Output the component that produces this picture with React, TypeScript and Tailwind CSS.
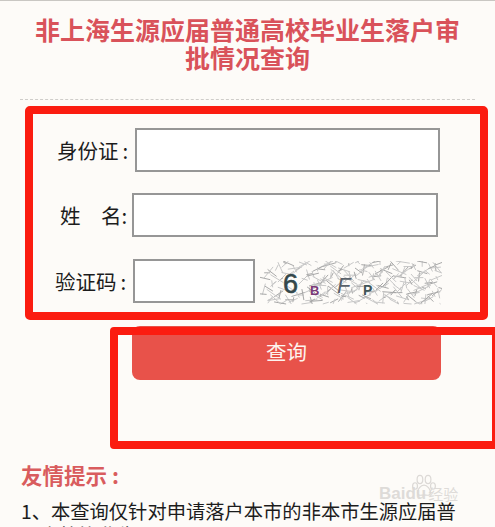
import React from 'react';

const cjk = 'font-["Noto_Sans_CJK_SC",sans-serif]';

// noise scratches behind the captcha letters
const scratches = Array.from({ length: 300 }, (_, i) => {
  const x = (i * 47.3) % 178;
  const y = (i * 29.7) % 42;
  const dx = ((i * 13) % 29) - 14;
  const dy = ((i * 7) % 23) - 11;
  return { x, y, dx, dy };
}).filter((s) => !(s.x > 20 && s.x < 40 && s.y > 10 && s.y < 30) && !(s.x < 18 && s.y < 8));

const Captcha: React.FC = () => (
  <svg width="182" height="44" viewBox="0 0 182 44" className="ml-[5px] mt-[2px] shrink-0">
    {scratches.map((s, i) => (
      <line
        key={i}
        x1={s.x + 3}
        y1={s.y + 1}
        x2={s.x + 3 + s.dx}
        y2={Math.min(43, Math.max(0, s.y + 1 + s.dy))}
        stroke={i % 3 === 0 ? '#a8a8a8' : '#c8c8c8'}
        strokeWidth="1"
      />
    ))}
    <text x="23" y="32" fontSize="27" stroke="#34474a" strokeWidth="0.6" fill="#34474a" fontFamily="Liberation Sans">6</text>
    <text x="50" y="34" fontSize="13" fontWeight="700" fill="#7a3a78" fontFamily="Liberation Sans">B</text>
    <text x="77" y="32" fontSize="22" fill="#59616a" fontStyle="italic" fontFamily="Liberation Sans">F</text>
    <text x="103" y="34" fontSize="14" fontWeight="700" fill="#3f5557" fontFamily="Liberation Sans">P</text>
  </svg>
);

const Paw: React.FC = () => (
  <svg width="30" height="26" viewBox="0 0 30 32" className="absolute left-[30px] top-[-14px]" fill="none" stroke="#dcd9d6" strokeWidth="1.5">
    <ellipse cx="10" cy="8" rx="3.5" ry="5" />
    <ellipse cx="20" cy="8" rx="3.5" ry="5" />
    <ellipse cx="4" cy="16" rx="3" ry="4" />
    <ellipse cx="26" cy="16" rx="3" ry="4" />
    <path d="M15 15c-4 0-8 5-8 9 0 5 5 3 8 3s8 2 8-3c0-4-4-9-8-9z" />
  </svg>
);

const App: React.FC = () => {
  return (
    <div className={`relative h-[527px] w-[495px] overflow-hidden bg-[#fdfbf8] ${cjk}`}>
      <div className="h-px bg-[#c9c7c3]" />

      <h1 className="mx-[34px] pt-[14px] text-center text-[25px] leading-[28px] font-bold text-[#d9525a]">
        非上海生源应届普通高校毕业生落户审批情况查询
      </h1>

      <div className="mx-[20px] mt-[28px] border-t border-dashed border-[#cfcdca]" />

      <div className="mt-[28px] flex items-center pl-[57px]">
        <span className="w-[78px] text-[20.5px] leading-[30px] text-[#1c1c1c]">
          身份证<span className="ml-[4px]">:</span>
        </span>
        <input className="h-[44px] w-[305px] border-2 border-[#969696] bg-white" />
      </div>

      <div className="mt-[21px] flex items-center pl-[60px]">
        <span className="flex w-[72px] text-[20.5px] leading-[30px] text-[#1c1c1c]">
          <span className="w-[41px]">姓</span>
          <span>名:</span>
        </span>
        <input className="h-[44px] w-[306px] border-2 border-[#969696] bg-white" />
      </div>

      <div className="mt-[22px] flex items-start pl-[55px]">
        <span className="mt-[7px] w-[78px] text-[20.5px] leading-[30px] text-[#1c1c1c]">
          验证码<span className="ml-[4px]">:</span>
        </span>
        <input className="h-[44px] w-[122px] border-2 border-[#969696] bg-white" />
        <Captcha />
      </div>

      <button className="mt-[21px] ml-[132px] block h-[54px] w-[309px] rounded-[8px] bg-[#e8524a] pb-[4px] text-[20.5px] text-[#fdf3ee]">
        查询
      </button>

      <h2 className="mt-[80px] pl-[21px] text-[21.5px] leading-[30px] font-bold text-[#d95c5e]">友情提示 :</h2>

      <p className="mt-[9px] px-[21px] text-[19.3px] leading-[24px] text-[#1c1c1c]">
        1、本查询仅针对申请落户本市的非本市生源应届普通高校毕业生。
      </p>

      {/* annotation boxes drawn over the screenshot */}
      <div className="absolute left-[25px] top-[106px] h-[214px] w-[463px] rounded-[5px] border-[8px] border-[#fb1c10]" />
      <div className="absolute left-[110px] top-[327px] h-[122px] w-[390px] rounded-[4px] border-[8px] border-[#fb1c10]" />

      {/* watermark */}
      <div className="absolute left-[379px] top-[487px] flex h-[14px] items-center gap-[2px] font-['Liberation_Sans',sans-serif] text-[#dedbd8]">
        <Paw />
        <span className="text-[17px] leading-[14px] font-bold">Baidu</span>
        <span className={`text-[15px] leading-[14px] ${cjk}`}>经验</span>
      </div>
    </div>
  );
};

export default App;
